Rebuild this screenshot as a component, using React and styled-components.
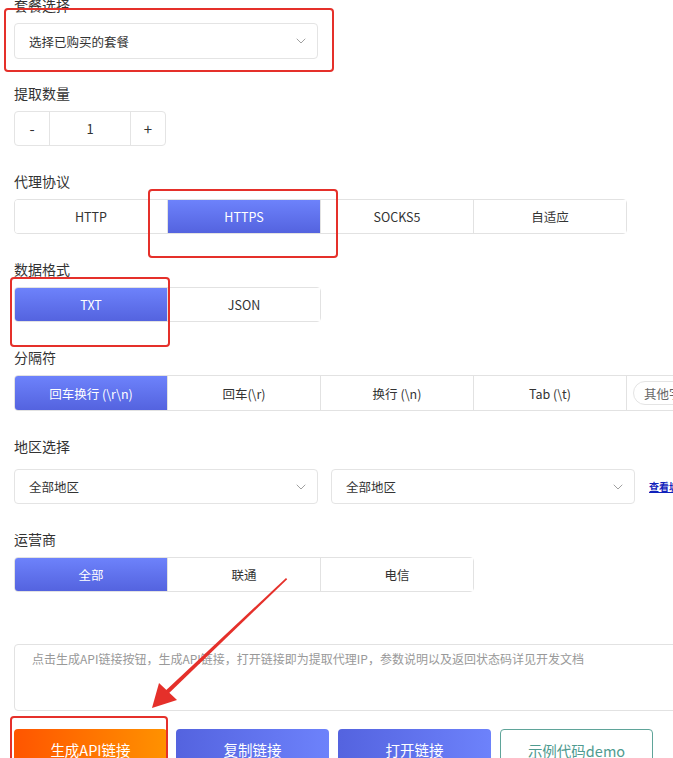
import React from 'react'
import styled, { createGlobalStyle } from 'styled-components'
import { ChevronDown } from 'lucide-react'

const GlobalStyle = createGlobalStyle`
  html, body {
    margin: 0;
    padding: 0;
    background: #fff;
    overflow: hidden;
  }
  body {
    font-family: 'Noto Sans CJK SC', 'Noto Sans', sans-serif;
    color: #333;
  }
`

const protocols = ['HTTP', 'HTTPS', 'SOCKS5', '自适应']
const formats = ['TXT', 'JSON']
const separators = ['回车换行 (\\r\\n)', '回车(\\r)', '换行 (\\n)', 'Tab (\\t)']
const carriers = ['全部', '联通', '电信']

const Segmented = ({ items, active, height, children }) => (
  <Group $height={height}>
    {items.map((item, i) => (
      <Segment key={item} $active={i === active}>
        {item}
      </Segment>
    ))}
    {children}
  </Group>
)

const Select = ({ value, height }) => (
  <SelectBox $height={height}>
    <span>{value}</span>
    <ChevronDown size={16} strokeWidth={1.4} color="#999" />
  </SelectBox>
)

const App = () => (
  <Page>
    <GlobalStyle />
    <Form>
      <Section $first $space={24}>
        <Label>套餐选择</Label>
        <Select value="选择已购买的套餐" height={36} />
      </Section>

      <Section>
        <Label>提取数量</Label>
        <Stepper>
          <StepButton>-</StepButton>
          <StepValue>1</StepValue>
          <StepButton>+</StepButton>
        </Stepper>
      </Section>

      <Section>
        <Label>代理协议</Label>
        <Segmented items={protocols} active={1} />
      </Section>

      <Section>
        <Label>数据格式</Label>
        <Segmented items={formats} active={0} />
      </Section>

      <Section>
        <Label>分隔符</Label>
        <Segmented items={separators} active={0} height={36}>
          <OtherCell>
            <OtherInput>其他字符</OtherInput>
          </OtherCell>
        </Segmented>
      </Section>

      <Section $gap={13}>
        <Label>地区选择</Label>
        <RegionRow>
          <Select value="全部地区" />
          <Select value="全部地区" />
          <CityLink>查看城市</CityLink>
        </RegionRow>
      </Section>

      <Section>
        <Label>运营商</Label>
        <Segmented items={carriers} active={0} />
      </Section>

      <Notes>
        点击生成API链接按钮，生成API链接，打开链接即为提取代理IP，参数说明以及返回状态码详见开发文档
      </Notes>

      <Actions>
        <ActionButton $variant="orange">生成API链接</ActionButton>
        <ActionButton $variant="blue">复制链接</ActionButton>
        <ActionButton $variant="blue">打开链接</ActionButton>
        <ActionButton $variant="outline">示例代码demo</ActionButton>
      </Actions>
    </Form>

    <Mark style={{ left: 4, top: 8, width: 330, height: 64 }} />
    <Mark style={{ left: 148, top: 189, width: 190, height: 69 }} />
    <Mark style={{ left: 10, top: 277, width: 160, height: 70 }} />
    <Mark style={{ left: 10, top: 716, width: 158, height: 60 }} />
    <Arrow width="673" height="758" viewBox="0 0 673 758">
      <polygon points="286,578 287.2,579.2 165,697 162,694" fill="#e5302a" />
      <polygon points="152,708 159,683 177,700" fill="#e5302a" />
    </Arrow>
  </Page>
)

export default App

// STYLES

const Page = styled.div`
  position: relative;
  width: 673px;
  height: 758px;
  overflow: hidden;
`

const Form = styled.div`
  display: flex;
  flex-direction: column;
  padding: 0 0 0 14px;
  margin-top: -5px;
`

const Section = styled.div`
  display: flex;
  flex-direction: column;
  gap: ${(p) => (p.$gap ? p.$gap : 8)}px;
  margin-bottom: ${(p) => (p.$space ? p.$space : 25)}px;
`

const Label = styled.div`
  font-size: 14px;
  line-height: 20px;
  color: #333;
`

const SelectBox = styled.div`
  box-sizing: border-box;
  display: flex;
  flex-shrink: 0;
  align-items: center;
  justify-content: space-between;
  width: 304px;
  height: ${(p) => (p.$height ? p.$height : 35)}px;
  padding: 0 8px 0 14px;
  border: 1px solid #e4e4e4;
  border-radius: 4px;
  font-size: 12.5px;
  color: #333;
`

const Stepper = styled.div`
  display: flex;
  width: 152px;
  height: 35px;
  box-sizing: border-box;
  border: 1px solid #e4e4e4;
  border-radius: 4px;
`

const StepButton = styled.div`
  display: flex;
  align-items: center;
  justify-content: center;
  width: 35px;
  font-size: 15px;
  color: #333;
`

const StepValue = styled.div`
  display: flex;
  align-items: center;
  justify-content: center;
  width: 82px;
  border-left: 1px solid #e4e4e4;
  border-right: 1px solid #e4e4e4;
  font-size: 13px;
`

const Group = styled.div`
  display: flex;
  align-self: flex-start;
  box-sizing: border-box;
  border: 1px solid #e2e2e2;
  border-radius: 4px;
  height: ${(p) => (p.$height ? p.$height : 35)}px;
`

const Segment = styled.div`
  box-sizing: border-box;
  display: flex;
  align-items: center;
  justify-content: center;
  width: 153px;
  flex-shrink: 0;
  font-size: 12.5px;
  color: ${(p) => (p.$active ? '#fff' : '#333')};
  background: ${(p) =>
    p.$active ? 'linear-gradient(180deg, #6d82fb 0%, #5463df 100%)' : '#fff'};
  & + & {
    border-left: 1px solid #e2e2e2;
  }
  &:first-child {
    width: 152px;
    border-radius: 3px 0 0 3px;
  }
`

const OtherCell = styled.div`
  box-sizing: border-box;
  display: flex;
  align-items: center;
  width: 153px;
  flex-shrink: 0;
  padding-left: 6px;
  border-left: 1px solid #e2e2e2;
`

const OtherInput = styled.div`
  display: flex;
  align-items: center;
  box-sizing: border-box;
  width: 130px;
  height: 24px;
  padding-left: 10px;
  border: 1px solid #e4e4e4;
  border-radius: 12px;
  font-size: 12.5px;
  color: #666;
`

const RegionRow = styled.div`
  display: flex;
  align-items: center;
  gap: 13px;
  white-space: nowrap;
`

const CityLink = styled.a`
  margin-left: 1px;
  font-size: 10px;
  font-weight: 700;
  color: #1122bb;
  text-decoration: underline;
`

const Notes = styled.div`
  box-sizing: border-box;
  width: 680px;
  height: 67px;
  margin-top: 27px;
  padding: 5px 17px;
  border: 1px solid #e2e2e2;
  border-radius: 4px;
  font-size: 12px;
  line-height: 18px;
  color: #999;
  white-space: nowrap;
`

const Actions = styled.div`
  display: flex;
  gap: 9px;
  margin-top: 18px;
`

const variants = {
  orange: 'background: linear-gradient(90deg, #ff5500 0%, #ff9200 100%); color: #fff; border: none;',
  blue: 'background: linear-gradient(90deg, #5463df 0%, #6d82fb 100%); color: #fff; border: none;',
  outline: 'background: #fff; color: #4f9b90; border: 1px solid #5fa499;',
}

const ActionButton = styled.div`
  box-sizing: border-box;
  display: flex;
  justify-content: center;
  width: 153px;
  height: 40px;
  padding-top: 9px;
  border-radius: 4px;
  font-size: 14.5px;
  line-height: 24px;
  ${(p) => variants[p.$variant]}
`

const Mark = styled.div`
  position: absolute;
  box-sizing: border-box;
  border: 2px solid #e5302a;
  border-radius: 4px;
  pointer-events: none;
`

const Arrow = styled.svg`
  position: absolute;
  left: 0;
  top: 0;
  pointer-events: none;
`
